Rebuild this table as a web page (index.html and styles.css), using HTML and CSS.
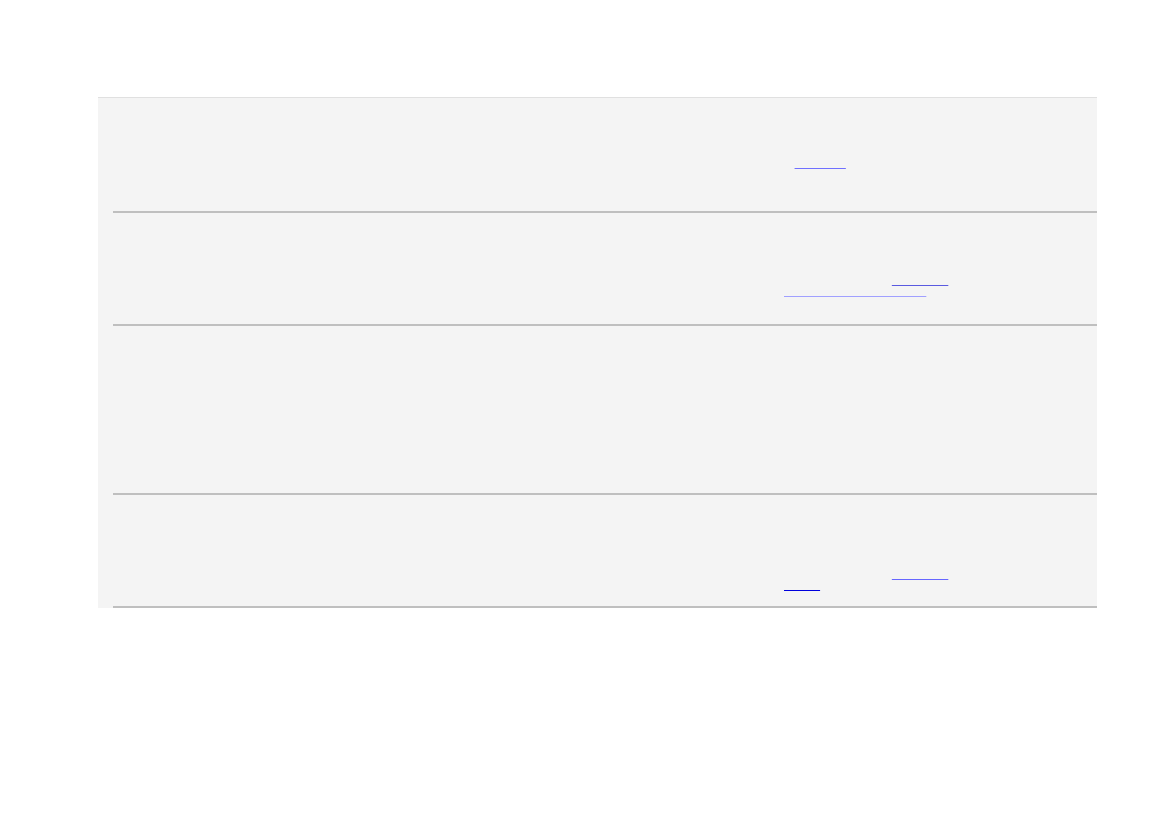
FILE: index.html
```html
<!DOCTYPE html>
<html lang="es">
<head>
<meta charset="utf-8">
<title>Tabla</title>
<link rel="stylesheet" href="styles.css">
</head>
<body>
<div class="panel">
  <div class="row row-a">
    <div class="cell">Servicio</div>
    <div class="cell">Sí</div>
    <div class="cell">Descripción del servicio disponible</div>
    <div class="cell text">el <a class="lnk l1" href="#">documento</a></div>
    <div class="cell">Activo</div>
  </div>
  <div class="row row-b">
    <div class="cell">Consultas</div>
    <div class="cell">Sí</div>
    <div class="cell">Gestión de consultas y solicitudes</div>
    <div class="cell text">Para más información y <a class="lnk l2" href="#">documentos</a> <a class="lnk l3" href="#">guía de procedimientos internos</a></div>
    <div class="cell">Activo</div>
  </div>
  <div class="row row-c">
    <div class="cell">Registro</div>
    <div class="cell">No</div>
    <div class="cell">Registro de datos</div>
    <div class="cell text"></div>
    <div class="cell">Inactivo</div>
  </div>
  <div class="row row-d">
    <div class="cell">Soporte</div>
    <div class="cell">Sí</div>
    <div class="cell">Soporte técnico y asistencia</div>
    <div class="cell text">Para más información y <a class="lnk l4" href="#">documentos</a> <a class="lnk l5" href="#">detalles</a></div>
    <div class="cell">Activo</div>
  </div>
</div>
</body>
</html>
```
FILE: styles.css
```css
html, body {
  margin: 0;
  padding: 0;
  background: #ffffff;
}

body {
  font-family: "Liberation Sans", Arial, sans-serif;
  font-size: 10px;
  line-height: 11px;
  padding-top: 97px;
}

.panel {
  margin-left: 98px;
  width: 984px;
  padding-left: 15px;
  background: #f4f4f4;
  border-top: 1px solid #e0e0e0;
}

.row {
  display: grid;
  grid-template-columns: 257px 59px 355px 166px 147px;
  border-bottom: 2px solid #bfbfbf;
}

.row-a { height: 113px; }
.row-b { height: 111px; }
.row-c { height: 167px; }
.row-d { height: 111px; }

.cell {
  color: transparent;
}

.row-a .text { padding-top: 60px; }
.row-b .text { padding-top: 62px; }
.row-d .text { padding-top: 74px; }

.lnk {
  color: transparent;
  text-decoration: underline;
  text-decoration-thickness: 1px;
  text-decoration-skip-ink: none;
  letter-spacing: 0.2px;
}

.l1 { text-decoration-color: #7070ff; }
.l2 { text-decoration-color: #5a5ae0; }
.l3 { text-decoration-color: #a0a0ff; letter-spacing: 0; }
.l4 { text-decoration-color: #6666ff; }
.l5 { text-decoration-color: #0000dd; }
```
